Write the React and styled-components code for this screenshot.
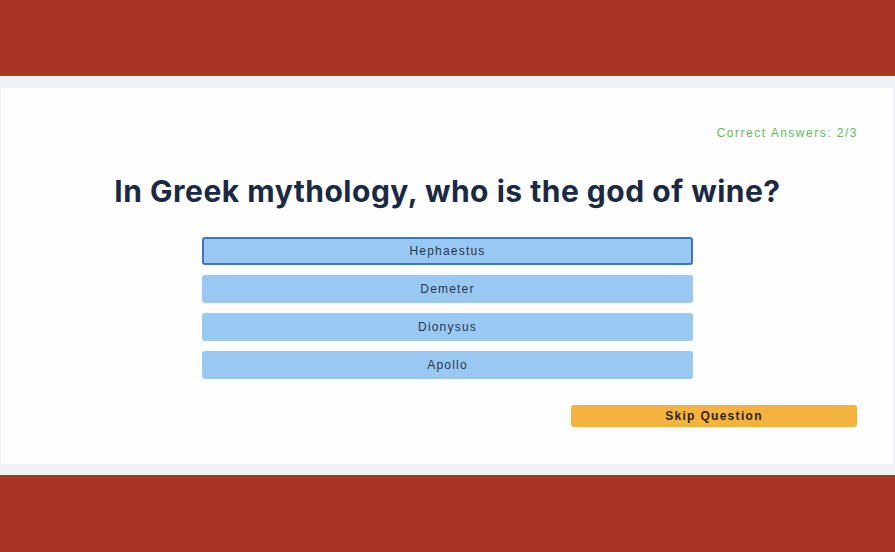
import styled, { createGlobalStyle } from "styled-components";

const GlobalStyle = createGlobalStyle`
  html, body {
    margin: 0;
    padding: 0;
    background-color: #a93324;
  }
  body {
    font-family: "Liberation Sans", Arial, sans-serif;
  }
`;

const Page = styled.div`
  height: 552px;
  display: flex;
  flex-direction: column;
  background-color: #a93324;
`;

const Band = styled.div`
  height: 76px;
  background-color: #a93324;
`;

const Stage = styled.div`
  background-color: #eef2f6;
  padding: 12px 2px 11px 1px;
`;

const Card = styled.div`
  background-color: #fefefe;
  height: 376px;
  box-sizing: border-box;
  padding: 37px 35px 0 36px;
  display: flex;
  flex-direction: column;
`;

const Score = styled.div`
  align-self: flex-end;
  color: #5dbb56;
  font-size: 12px;
  letter-spacing: 1.5px;
  line-height: 16px;
  margin-right: 0;
`;

const Question = styled.h1`
  margin: 32px 0 0;
  text-align: center;
  font-family: Inter, "Liberation Sans", sans-serif;
  font-weight: 700;
  font-size: 30px;
  letter-spacing: 0.5px;
  line-height: 36px;
  color: #1b2a44;
`;

const Answers = styled.div`
  display: flex;
  flex-direction: column;
  align-items: center;
  gap: 10px;
  margin-top: 28px;
`;

const Answer = styled.button`
  width: 491px;
  height: 28px;
  box-sizing: border-box;
  border: 2px solid ${({ $active }) => ($active ? "#3f74c6" : "#99c9f3")};
  border-radius: 3px;
  background-color: #99c9f3;
  color: #26364a;
  font-family: "Liberation Sans", Arial, sans-serif;
  font-size: 12px;
  letter-spacing: 1.2px;
  padding: 0;
  cursor: pointer;
`;

const Footer = styled.div`
  display: flex;
  justify-content: flex-end;
  margin-top: 26px;
  padding-right: 1px;
`;

const SkipButton = styled.button`
  width: 286px;
  height: 22px;
  border: none;
  border-radius: 3px;
  background-color: #f4b23e;
  color: #2e2410;
  font-family: "Liberation Sans", Arial, sans-serif;
  font-weight: 700;
  font-size: 12px;
  letter-spacing: 1.3px;
  padding: 0;
  cursor: pointer;
`;

const answers = ["Hephaestus", "Demeter", "Dionysus", "Apollo"];

const App = () => {
  return (
    <>
      <GlobalStyle />
      <Page>
        <Band />
        <Stage>
          <Card>
            <Score>Correct Answers: 2/3</Score>
            <Question>In Greek mythology, who is the god of wine?</Question>
            <Answers>
              {answers.map((name, i) => (
                <Answer key={name} $active={i === 0}>
                  {name}
                </Answer>
              ))}
            </Answers>
            <Footer>
              <SkipButton>Skip Question</SkipButton>
            </Footer>
          </Card>
        </Stage>
      </Page>
    </>
  );
};

export default App;
